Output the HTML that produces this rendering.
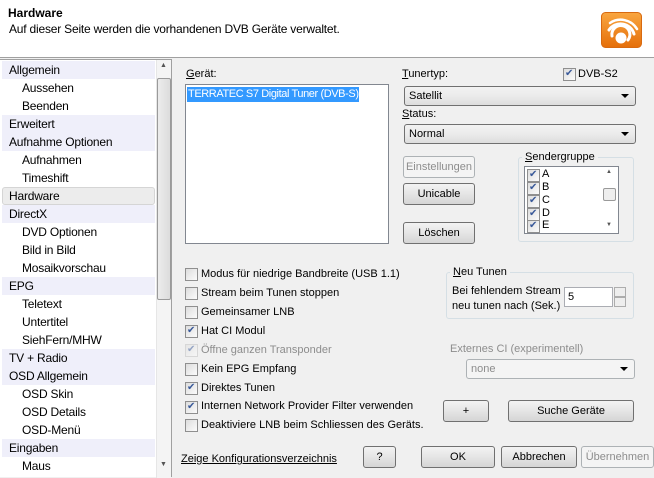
<!DOCTYPE html>
<html><head><meta charset="utf-8"><style>
*{box-sizing:border-box;margin:0;padding:0}
body{width:654px;height:477px;overflow:hidden;background:#f0f0f0;font-family:"Liberation Sans",sans-serif;font-size:11px;color:#000;position:relative}
.a{position:absolute;white-space:nowrap}
#hdr{position:absolute;left:0;top:0;width:654px;height:58px;background:#fff;border-bottom:1px solid #a0a0a0}
#left{position:absolute;left:0;top:59px;width:172px;height:418px;background:#fff;border-right:1px solid #a0a0a0;border-top:1px solid #a0a0a0}
.r{position:absolute;left:2px;width:153px;height:18px;line-height:18px;padding-left:7px;font-size:12px;letter-spacing:-0.2px}
.r.s{padding-left:20px}
.r.c{background:#efeffa}
.r.h{background:#ececec;border:1px solid #d5d5d5;border-radius:3px;line-height:16px;padding-left:6px}
.btn{position:absolute;height:22px;border:1px solid #707070;border-radius:3px;background:linear-gradient(#f3f3f3,#e5e5e5 50%,#d5d5d5);text-align:center;line-height:20px}
.dis{border-color:#adb2b5;color:#8d8d8d;background:#f4f4f4}
.sel{position:absolute;height:20px;border:1px solid #707070;border-radius:3px;background:linear-gradient(#f2f2f2,#ebebeb 50%,#dddddd);line-height:18px;padding-left:4px}
.sel:after{content:"";position:absolute;right:6px;top:7px;border-left:4px solid transparent;border-right:4px solid transparent;border-top:4px solid #000}
.cb{position:absolute;width:13px;height:13px;border:1px solid #8f8f8f;background:linear-gradient(135deg,#ddd,#fbfbfb)}
.ck:after{content:"✔";position:absolute;left:1px;top:-1px;font-size:10px;color:#3a5a9a}
.grp{position:absolute;border:1px solid #d5dfe5;border-radius:3px}
u{text-decoration:underline}
</style></head><body>
<div id="hdr">
<div class="a" style="left:8px;top:6px;font-weight:bold;font-size:12px">Hardware</div>
<div class="a" style="left:9px;top:22px;font-size:12px;letter-spacing:-0.2px">Auf dieser Seite werden die vorhandenen DVB Geräte verwaltet.</div>
<svg style="position:absolute;left:601px;top:12px" width="41" height="36" viewBox="0 0 41 36">
<defs><linearGradient id="g" x1="0" y1="0" x2="0" y2="1"><stop offset="0" stop-color="#f9a640"/><stop offset="1" stop-color="#e56f0a"/></linearGradient></defs>
<rect x="0.5" y="0.5" width="40" height="35" rx="4" fill="url(#g)" stroke="#d86a10"/>
<g fill="none" stroke="#fff" stroke-linecap="round">
<path d="M11 24 A9 9 0 1 1 27 28" stroke-width="3"/>
<path d="M8 18 A14 14 0 0 1 33 22" stroke-width="3"/>
<path d="M9 11 A19 19 0 0 1 36 17" stroke-width="2.5"/>
</g>
<circle cx="20" cy="26" r="5.5" fill="#fff"/>
</svg>
</div>
<div id="left">
<div class="r c" style="top:1px">Allgemein</div>
<div class="r s" style="top:19px">Aussehen</div>
<div class="r s" style="top:37px">Beenden</div>
<div class="r c" style="top:55px">Erweitert</div>
<div class="r c" style="top:73px">Aufnahme Optionen</div>
<div class="r s" style="top:91px">Aufnahmen</div>
<div class="r s" style="top:109px">Timeshift</div>
<div class="r h" style="top:127px">Hardware</div>
<div class="r c" style="top:145px">DirectX</div>
<div class="r s" style="top:163px">DVD Optionen</div>
<div class="r s" style="top:181px">Bild in Bild</div>
<div class="r s" style="top:199px">Mosaikvorschau</div>
<div class="r c" style="top:217px">EPG</div>
<div class="r s" style="top:235px">Teletext</div>
<div class="r s" style="top:253px">Untertitel</div>
<div class="r s" style="top:271px">SiehFern/MHW</div>
<div class="r c" style="top:289px">TV + Radio</div>
<div class="r c" style="top:307px">OSD Allgemein</div>
<div class="r s" style="top:325px">OSD Skin</div>
<div class="r s" style="top:343px">OSD Details</div>
<div class="r s" style="top:361px">OSD-Menü</div>
<div class="r c" style="top:379px">Eingaben</div>
<div class="r s" style="top:397px">Maus</div>
<div style="position:absolute;left:156px;top:0;width:15px;height:418px;background:#f4f4f4;border-left:1px solid #e6e6e6"></div>
<div class="a" style="left:160px;top:2px;font-size:7px;color:#555">▲</div>
<div style="position:absolute;left:157px;top:18px;width:14px;height:222px;border:1px solid #9a9a9a;border-radius:2px;background:linear-gradient(90deg,#ececec,#dcdcdc)"></div>
<div class="a" style="left:160px;top:401px;font-size:7px;color:#555">▼</div>
</div>

<div class="a" style="left:186px;top:68px"><u>G</u>erät:</div>
<div style="position:absolute;left:185px;top:84px;width:204px;height:160px;background:#fff;border:1px solid #828790"></div>
<div class="a" style="left:187px;top:87px;width:172px;height:15px;background:#3399ff;color:#fff;padding-left:1px;line-height:14px;letter-spacing:-0.4px;overflow:hidden">TERRATEC S7 Digital Tuner (DVB-S)</div>

<div class="a" style="left:402px;top:68px"><u>T</u>unertyp:</div>
<div class="cb ck" style="left:563px;top:68px"></div>
<div class="a" style="left:578px;top:68px">DVB-S2</div>
<div class="sel" style="left:404px;top:86px;width:232px">Satellit</div>
<div class="a" style="left:402px;top:108px"><u>S</u>tatus:</div>
<div class="sel" style="left:404px;top:124px;width:232px">Normal</div>

<div class="btn dis" style="left:403px;top:156px;width:72px">Einstellungen</div>
<div class="btn" style="left:403px;top:183px;width:72px">Unicable</div>
<div class="btn" style="left:403px;top:222px;width:72px">Löschen</div>

<div class="grp" style="left:518px;top:157px;width:116px;height:85px"></div>
<div class="a" style="left:522px;top:151px;background:#f0f0f0;padding:0 3px"><u>S</u>endergruppe</div>
<div style="position:absolute;left:524px;top:166px;width:95px;height:68px;background:#fff;border:1px solid #828790"></div>
<div class="cb ck" style="left:527px;top:169px"></div><div class="a" style="left:542px;top:168px">A</div>
<div class="cb ck" style="left:527px;top:182px"></div><div class="a" style="left:542px;top:181px">B</div>
<div class="cb ck" style="left:527px;top:195px"></div><div class="a" style="left:542px;top:194px">C</div>
<div class="cb ck" style="left:527px;top:208px"></div><div class="a" style="left:542px;top:207px">D</div>
<div class="cb ck" style="left:527px;top:220px"></div><div class="a" style="left:542px;top:219px">E</div>
<div class="a" style="left:606px;top:169px;font-size:6px;color:#555">▲</div>
<div style="position:absolute;left:603px;top:188px;width:13px;height:13px;border:1px solid #999;border-radius:2px;background:#eee"></div>
<div class="a" style="left:606px;top:222px;font-size:6px;color:#555">▼</div>

<div class="cb" style="left:185px;top:268px"></div><div class="a" style="left:201px;top:268px">Modus für niedrige Bandbreite (USB 1.1)</div>
<div class="cb" style="left:185px;top:287px"></div><div class="a" style="left:201px;top:287px">Stream beim Tunen stoppen</div>
<div class="cb" style="left:185px;top:306px"></div><div class="a" style="left:201px;top:306px">Gemeinsamer LNB</div>
<div class="cb ck" style="left:185px;top:325px"></div><div class="a" style="left:201px;top:325px">Hat CI Modul</div>
<div class="cb ck" style="left:185px;top:344px;border-color:#c0c0c0;opacity:.5"></div><div class="a" style="left:201px;top:344px;color:#8d8d8d">Öffne ganzen Transponder</div>
<div class="cb" style="left:185px;top:363px"></div><div class="a" style="left:201px;top:363px">Kein EPG Empfang</div>
<div class="cb ck" style="left:185px;top:382px"></div><div class="a" style="left:201px;top:382px">Direktes Tunen</div>
<div class="cb ck" style="left:185px;top:401px"></div><div class="a" style="left:201px;top:400px">Internen Network Provider Filter verwenden</div>
<div class="cb" style="left:185px;top:419px"></div><div class="a" style="left:201px;top:419px">Deaktiviere LNB beim Schliessen des Geräts.</div>

<div class="grp" style="left:446px;top:272px;width:188px;height:47px"></div>
<div class="a" style="left:450px;top:266px;background:#f0f0f0;padding:0 3px"><u>N</u>eu Tunen</div>
<div class="a" style="left:452px;top:284px;line-height:15px">Bei fehlendem Stream<br>neu tunen nach (Sek.)</div>
<div style="position:absolute;left:564px;top:287px;width:49px;height:20px;background:#fff;border:1px solid #abadb3;padding:3px 3px">5</div>
<div style="position:absolute;left:614px;top:287px;width:12px;height:10px;border:1px solid #adadad;background:#eee"></div>
<div style="position:absolute;left:614px;top:297px;width:12px;height:10px;border:1px solid #adadad;background:#eee"></div>

<div class="a" style="left:450px;top:343px;color:#8d8d8d">Externes CI (experimentell)</div>
<div class="sel" style="left:466px;top:359px;width:169px;border-color:#adb2b5;background:#f4f4f4;color:#8d8d8d">none</div>

<div class="btn" style="left:443px;top:400px;width:46px">+</div>
<div class="btn" style="left:508px;top:400px;width:126px">Suche Geräte</div>

<div class="a" style="left:181px;top:453px;text-decoration:underline">Zeige Konfigurationsverzeichnis</div>
<div class="btn" style="left:363px;top:446px;width:33px">?</div>
<div class="btn" style="left:421px;top:446px;width:74px">OK</div>
<div class="btn" style="left:501px;top:446px;width:76px">Abbrechen</div>
<div class="btn dis" style="left:581px;top:446px;width:73px">Übernehmen</div>
</body></html>
